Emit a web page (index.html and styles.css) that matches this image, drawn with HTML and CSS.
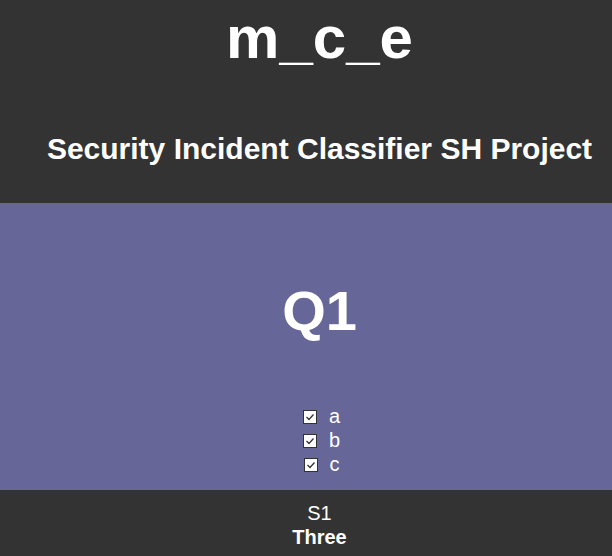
FILE: index.html
```html
<!DOCTYPE html>
<html lang="en">
<head>
<meta charset="utf-8">
<title>m_c_e</title>
<link rel="stylesheet" href="styles.css">
</head>
<body>
<header class="site-header">
  <h1 class="site-title">m_c_e</h1>
  <h2 class="site-subtitle">Security Incident Classifier SH Project</h2>
</header>
<main class="question">
  <h2 class="question-title">Q1</h2>
  <div class="options">
    <label class="option"><span class="box"><svg viewBox="0 0 12 12" width="12" height="12"><polyline points="2.5,6 5,8.5 9.5,3.5" fill="none" stroke="#333" stroke-width="1.3"/></svg></span>a</label>
    <label class="option"><span class="box"><svg viewBox="0 0 12 12" width="12" height="12"><polyline points="2.5,6 5,8.5 9.5,3.5" fill="none" stroke="#333" stroke-width="1.3"/></svg></span>b</label>
    <label class="option"><span class="box"><svg viewBox="0 0 12 12" width="12" height="12"><polyline points="2.5,6 5,8.5 9.5,3.5" fill="none" stroke="#333" stroke-width="1.3"/></svg></span>c</label>
  </div>
</main>
<footer class="site-footer">
  <div class="footer-line">S1</div>
  <div class="footer-line footer-strong">Three</div>
</footer>
</body>
</html>
```
FILE: styles.css
```css
html, body {
  margin: 0;
  padding: 0;
}
body {
  font-family: "Liberation Sans", Arial, sans-serif;
  color: #ffffff;
  background: #333333;
}
.site-header {
  background: #333333;
  text-align: center;
  padding: 3px 0 37px 27px;
}
.site-title {
  margin: 0;
  font-size: 60px;
  line-height: 69px;
  font-weight: bold;
}
.site-subtitle {
  margin: 59px 0 0 0;
  font-size: 30px;
  line-height: 35px;
  font-weight: bold;
}
.question {
  background: #666699;
  text-align: center;
  padding: 76px 0 14px 27px;
}
.question-title {
  margin: 0;
  font-size: 56px;
  line-height: 64px;
  font-weight: bold;
}
.options {
  margin-top: 61px;
}
.option {
  display: block;
  font-size: 20px;
  line-height: 24px;
}
.box {
  display: inline-block;
  box-sizing: border-box;
  width: 14px;
  height: 14px;
  margin: 0 12px 0 4px;
  border: 1px solid #333333;
  background: #ffffff;
  vertical-align: -1px;
  position: relative;
}
.box svg {
  position: absolute;
  left: 0;
  top: 0;
}
.site-footer {
  background: #333333;
  text-align: center;
  padding: 11px 0 11px 27px;
}
.footer-line {
  font-size: 20px;
  line-height: 24px;
}
.footer-strong {
  font-weight: bold;
}
```
